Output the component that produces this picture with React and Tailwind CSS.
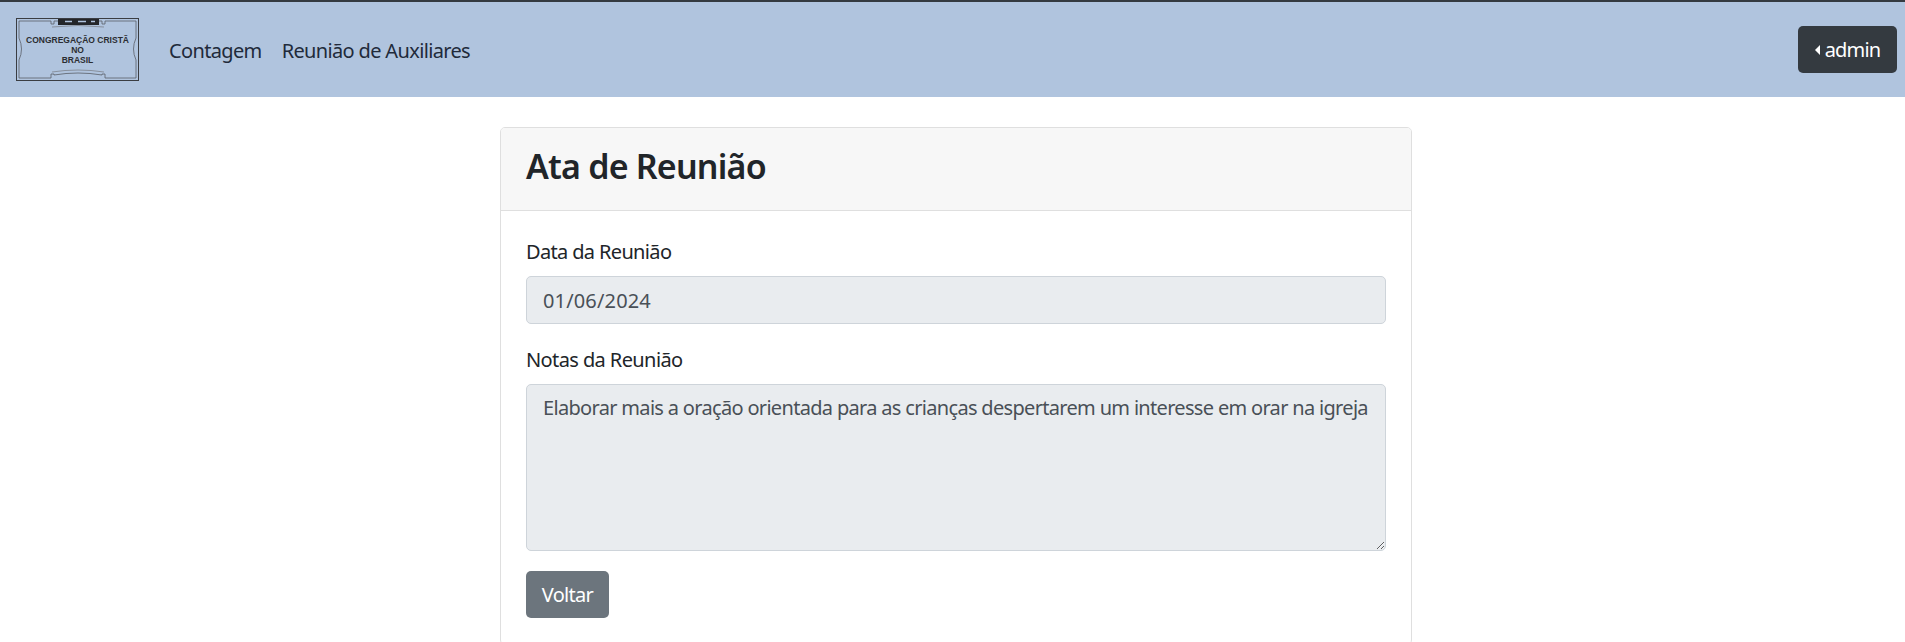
export default function App() {
  return (
    <div className="font-['Noto_Sans',sans-serif] text-[20px] leading-[30px] text-[#212529] bg-white">
      <nav className="h-[97px] border-t-2 border-[#343a40] bg-[#b0c4de] flex items-center pl-4 pr-[8px]">
        <svg width="123" height="63" viewBox="0 0 123 63" className="shrink-0">
          <rect x="0.5" y="0.5" width="122" height="62" fill="none" stroke="#3a3d42" strokeWidth="1" />
          <path d="M3 3H35V6H38V3H86V6H89V3H120V20Q115 31 120 42V60H89V56H86V57Q62 53 38 57V56H35V60H3V42Q8 31 3 20Z" fill="none" stroke="#5b6068" strokeWidth="0.8" />
          <path d="M36 9Q62 6 88 9" fill="none" stroke="#7d838c" strokeWidth="0.8" />
          <path d="M36 54Q62 50 88 54" fill="none" stroke="#7d838c" strokeWidth="0.8" />
          <path d="M42 1H83V7H42Z" fill="#24262a" />
          <path d="M49 3.5H56M62 3.5H70M75 3.5H79" stroke="#b0c4de" strokeWidth="1.4" fill="none" />
          <text x="61.5" y="25" textAnchor="middle" fontFamily="Liberation Sans" fontWeight="700" fontSize="8.5" fill="#2b2d31">CONGREGAÇÃO CRISTÃ</text>
          <text x="61.5" y="35" textAnchor="middle" fontFamily="Liberation Sans" fontWeight="700" fontSize="8.5" fill="#2b2d31">NO</text>
          <text x="61.5" y="45" textAnchor="middle" fontFamily="Liberation Sans" fontWeight="700" fontSize="8.5" fill="#2b2d31">BRASIL</text>
        </svg>
        <div className="flex ml-[30px] gap-[20px] tracking-[-0.65px] text-[#212a3a] pt-[2px]">
          <a>Contagem</a>
          <a>Reunião de Auxiliares</a>
        </div>
        <button className="ml-auto h-[47px] w-[99px] rounded-[5px] bg-[#343a40] text-white flex items-center justify-center gap-[5px] tracking-[-0.8px]">
          <span className="w-0 h-0 border-y-[5px] border-y-transparent border-r-[5px] border-r-white" />
          admin
        </button>
      </nav>
      <main className="flex justify-center pt-[30px] pl-[7px]">
        <section className="w-[912px] border border-[#dfdfdf] rounded-[5px] overflow-hidden">
          <header className="h-[83px] bg-[#f7f7f7] border-b border-[#dfdfdf] px-[25px] flex items-center">
            <h2 className="text-[34px] leading-[38px] font-semibold tracking-[-0.8px] -mt-[6px]">Ata de Reunião</h2>
          </header>
          <div className="px-[25px] pt-[26px] pb-[26px] flex flex-col">
            <label className="h-[30px] tracking-[-0.65px] mb-[9px]">Data da Reunião</label>
            <input readOnly value="01/06/2024" className="h-[48px] w-full bg-[#e9ecef] border border-[#ced4da] rounded-[5px] px-4 text-[#495057] tracking-[0.15px] outline-none" />
            <label className="h-[30px] tracking-[-0.6px] mt-[21px] mb-[9px]">Notas da Reunião</label>
            <textarea readOnly rows={5} value="Elaborar mais a oração orientada para as crianças despertarem um interesse em orar na igreja" className="h-[167px] w-full bg-[#e9ecef] border border-[#ced4da] rounded-[5px] px-4 py-[8px] text-[#495057] tracking-[-0.68px] outline-none resize-y block" />
            <button className="self-start mt-[20px] h-[47px] w-[83px] rounded-[5px] bg-[#6c757d] text-white tracking-[-0.7px]">Voltar</button>
          </div>
        </section>
      </main>
    </div>
  );
}
